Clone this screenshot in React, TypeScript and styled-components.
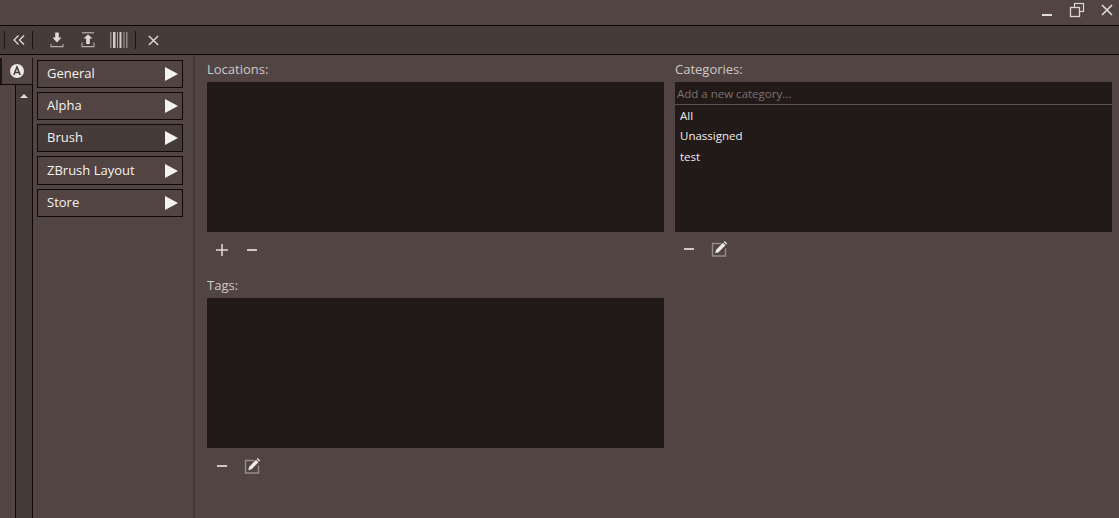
import React from "react";
import styled, { createGlobalStyle } from "styled-components";

const GlobalStyle = createGlobalStyle`
  html, body {
    margin: 0;
    padding: 0;
    height: 100%;
    background: #514442;
    overflow: hidden;
  }
  #root {
    height: 100%;
  }
`;

const Window = styled.div`
  width: 1119px;
  height: 518px;
  display: flex;
  flex-direction: column;
  background: #514442;
  color: #e6e2e0;
  font-family: "Open Sans", "Noto Sans", sans-serif;
  font-size: 12px;
`;

const TitleBar = styled.div`
  height: 25px;
  flex: none;
  box-sizing: content-box;
  display: flex;
  justify-content: flex-end;
  align-items: flex-start;
  gap: 12px;
  padding-right: 3px;
  border-bottom: 1px solid #0d0a09;
`;

const WindowButton = styled.div`
  width: 18px;
  height: 18px;
  margin-top: 1px;
  display: flex;
  align-items: center;
  justify-content: center;
`;

const Toolbar = styled.div`
  height: 28px;
  flex: none;
  display: flex;
  align-items: center;
  background: #463b39;
  border-bottom: 1px solid #0d0a09;
  padding-left: 4px;
`;

const ToolDivider = styled.div`
  width: 1px;
  height: 18px;
  background: #1b1513;
`;

const ToolButton = styled.div<{ $width: number; $lead?: number }>`
  width: ${props => props.$width}px;
  margin-left: ${props => props.$lead || 0}px;
  height: 20px;
  flex: none;
  display: flex;
  align-items: center;
  justify-content: center;
`;

const Body = styled.div`
  flex: 1;
  display: flex;
  min-height: 0;
`;

const Rail = styled.div`
  width: 33px;
  flex: none;
  display: flex;
  flex-direction: column;
`;

const RailHead = styled.div`
  height: 26px;
  flex: none;
  box-sizing: border-box;
  margin-top: 3px;
  display: flex;
  align-items: center;
  justify-content: center;
  padding-right: 1px;
  border-left: 2px solid #1b1513;
  border-right: 1px solid #1b1513;
`;

const RailBottom = styled.div`
  flex: 1;
  display: flex;
  justify-content: flex-end;
  border-top: 1px solid #0d0a09;
`;

const Scrollbar = styled.div`
  width: 18px;
  background: #463b39;
  border-left: 1px solid #0d0a09;
  border-right: 1px solid #0d0a09;
  box-sizing: border-box;
  display: flex;
  justify-content: center;
  padding-top: 9px;
`;

const ScrollArrow = styled.div`
  width: 0;
  height: 0;
  border-left: 4px solid transparent;
  border-right: 4px solid transparent;
  border-bottom: 4px solid #e0dcd9;
`;

const NavPanel = styled.nav`
  width: 162px;
  flex: none;
  box-sizing: border-box;
  padding: 5px 0 0 4px;
  display: flex;
  flex-direction: column;
  gap: 4px;
  border-right: 2px solid #433836;
`;

const NavButton = styled.div<{ $active?: boolean }>`
  width: 146px;
  height: 28px;
  flex: none;
  box-sizing: border-box;
  border: 1px solid #0d0a09;
  background: ${props => (props.$active ? "#463b39" : "#514442")};
  display: flex;
  align-items: center;
  justify-content: space-between;
  padding: 0 4px 2px 9px;
  font-size: 13px;
  font-weight: 500;
  color: #f5f3f1;
  &:nth-child(4) {
    height: 29px;
  }
`;

const NavArrow = styled.div`
  width: 0;
  height: 0;
  margin-top: 2px;
  border-top: 7.5px solid transparent;
  border-bottom: 7.5px solid transparent;
  border-left: 13px solid #f4f2f1;
`;

const Content = styled.main`
  flex: 1;
  display: grid;
  grid-template-columns: 457px 437px;
  grid-template-rows: 216px 1fr;
  column-gap: 11px;
  align-content: start;
  padding: 6px 0 0 12px;
`;

const Section = styled.section`
  display: flex;
  flex-direction: column;
`;

const SectionLabel = styled.div`
  height: 21px;
  line-height: 16px;
  font-size: 13px;
  color: #cfc9c6;
`;

const ListBox = styled.div`
  height: 150px;
  flex: none;
  background: #221a18;
`;

const CategoryInput = styled.input`
  display: block;
  width: 100%;
  height: 23px;
  box-sizing: border-box;
  border: none;
  border-bottom: 1px solid #5e5250;
  background: transparent;
  padding: 0 2px;
  font-family: inherit;
  font-size: 11.5px;
  outline: none;
  &::placeholder {
    color: #7b7270;
    opacity: 1;
  }
`;

const CategoryList = styled.ul`
  list-style: none;
  margin: 0;
  padding: 1px 0 0 5px;
`;

const CategoryItem = styled.li`
  height: 20.3px;
  line-height: 20px;
  font-size: 11.5px;
  color: #f0eeec;
`;

const IconRow = styled.div<{ $inset: number; $top: number }>`
  display: flex;
  align-items: center;
  gap: 12px;
  padding: ${props => props.$top}px 0 0 ${props => props.$inset}px;
`;

const IconSlot = styled.div`
  width: 18px;
  height: 18px;
  display: flex;
  align-items: center;
  justify-content: center;
`;

const stroke = "#ddd8d5";

const PlusIcon = () => (
  <svg width="14" height="14" viewBox="0 0 14 14">
    <path d="M7 1v12M1 7h12" stroke={stroke} strokeWidth="1.6" />
  </svg>
);

const MinusIcon = () => (
  <svg width="12" height="14" viewBox="0 0 12 14">
    <path d="M1 7h10" stroke={stroke} strokeWidth="1.8" />
  </svg>
);

const EditIcon = () => (
  <svg width="18" height="18" viewBox="0 0 18 18">
    <path d="M11 3.5H2.5v12.5h13V8.5" fill="none" stroke="#948c89" strokeWidth="1.4" />
    <path d="M5.2 13.2l1-3.4 6.8-7 2.5 2.4-6.9 7z" fill="#eeebe9" />
    <path d="M13.8 2l1-1 2.4 2.4-1 1z" fill="#eeebe9" />
  </svg>
);

const CollapseIcon = () => (
  <svg width="12" height="12" viewBox="0 0 12 12">
    <path d="M5.5 1.5L1 6l4.5 4.5M11 1.5L6.5 6l4.5 4.5" fill="none" stroke="#e2dedb" strokeWidth="1.3" />
  </svg>
);

const ImportIcon = () => (
  <svg width="14" height="16" viewBox="0 0 14 16">
    <path d="M5.2 0.5h3.6v5h2.7L7 10.5l-4.5-5h2.7z" fill="#e0dcd9" />
    <path d="M1 12v2.6h12V12" fill="none" stroke="#b5afac" strokeWidth="1.1" />
  </svg>
);

const ExportIcon = () => (
  <svg width="14" height="16" viewBox="0 0 14 16">
    <path d="M1 0.8h12" stroke="#b5afac" strokeWidth="1.2" />
    <path d="M5.2 12v-5.5H2.5L7 2.5l4.5 4H8.8V12z" fill="#e0dcd9" />
    <path d="M1 10.5v4.1h12v-4.1" fill="none" stroke="#b5afac" strokeWidth="1.1" />
  </svg>
);

const BarcodeIcon = () => (
  <svg width="18" height="16" viewBox="0 0 18 16">
    <rect x="0" y="0" width="1.5" height="16" fill="#8f8784" />
    <rect x="3" y="0" width="2.5" height="16" fill="#cfcac7" />
    <rect x="7" y="0" width="1" height="16" fill="#a8a19e" />
    <rect x="9.5" y="0" width="2" height="16" fill="#cfcac7" />
    <rect x="13.5" y="0" width="1" height="16" fill="#a8a19e" />
    <rect x="16" y="0" width="1.5" height="16" fill="#8f8784" />
  </svg>
);

const CloseIcon = ({ size, color }: { size: number; color: string }) => (
  <svg width={size} height={size} viewBox="0 0 12 12">
    <path d="M1 1l10 10M11 1L1 11" stroke={color} strokeWidth="1.6" />
  </svg>
);

const WinMinimize = () => (
  <svg width="12" height="18" viewBox="0 0 12 18">
    <path d="M1 14h10" stroke="#e0dcd9" strokeWidth="2" />
  </svg>
);

const WinRestore = () => (
  <svg width="16" height="16" viewBox="0 0 16 16">
    <rect x="5.5" y="1.5" width="9" height="8" fill="none" stroke="#ddd8d5" strokeWidth="1.2" />
    <rect x="1.5" y="5.5" width="9" height="9" fill="#514442" stroke="#ddd8d5" strokeWidth="1.3" />
  </svg>
);

const BadgeIcon = () => (
  <svg width="14" height="14" viewBox="0 0 14 14">
    <circle cx="7" cy="7" r="7" fill="#ece8e6" />
    <path d="M3.8 11L7 3l3.2 8M5 8.4h4" fill="none" stroke="#463b39" strokeWidth="1.5" />
  </svg>
);

const navItems = ["General", "Alpha", "Brush", "ZBrush Layout", "Store"];
const categories = ["All", "Unassigned", "test"];

export default function App() {
  return (
    <Window>
      <GlobalStyle />
      <TitleBar>
        <WindowButton>
          <WinMinimize />
        </WindowButton>
        <WindowButton>
          <WinRestore />
        </WindowButton>
        <WindowButton>
          <CloseIcon size={12} color="#e0dcd9" />
        </WindowButton>
      </TitleBar>
      <Toolbar>
        <ToolDivider />
        <ToolButton $width={27}>
          <CollapseIcon />
        </ToolButton>
        <ToolDivider />
        <ToolButton $width={24} $lead={12}>
          <ImportIcon />
        </ToolButton>
        <ToolButton $width={24} $lead={7}>
          <ExportIcon />
        </ToolButton>
        <ToolButton $width={32} $lead={3}>
          <BarcodeIcon />
        </ToolButton>
        <ToolDivider />
        <ToolButton $width={34}>
          <CloseIcon size={11} color="#ddd8d5" />
        </ToolButton>
      </Toolbar>
      <Body>
        <Rail>
          <RailHead>
            <BadgeIcon />
          </RailHead>
          <RailBottom>
            <Scrollbar>
              <ScrollArrow />
            </Scrollbar>
          </RailBottom>
        </Rail>
        <NavPanel>
          {navItems.map(item => (
            <NavButton key={item} $active={item === "Brush"}>
              {item}
              <NavArrow />
            </NavButton>
          ))}
        </NavPanel>
        <Content>
          <Section>
            <SectionLabel>Locations:</SectionLabel>
            <ListBox />
            <IconRow $inset={6} $top={9}>
              <IconSlot>
                <PlusIcon />
              </IconSlot>
              <IconSlot>
                <MinusIcon />
              </IconSlot>
            </IconRow>
          </Section>
          <Section>
            <SectionLabel>Categories:</SectionLabel>
            <ListBox>
              <CategoryInput placeholder="Add a new category..." />
              <CategoryList>
                {categories.map(category => (
                  <CategoryItem key={category}>{category}</CategoryItem>
                ))}
              </CategoryList>
            </ListBox>
            <IconRow $inset={5} $top={8}>
              <IconSlot>
                <MinusIcon />
              </IconSlot>
              <IconSlot>
                <EditIcon />
              </IconSlot>
            </IconRow>
          </Section>
          <Section>
            <SectionLabel>Tags:</SectionLabel>
            <ListBox />
            <IconRow $inset={6} $top={9}>
              <IconSlot>
                <MinusIcon />
              </IconSlot>
              <IconSlot>
                <EditIcon />
              </IconSlot>
            </IconRow>
          </Section>
        </Content>
      </Body>
    </Window>
  );
}
